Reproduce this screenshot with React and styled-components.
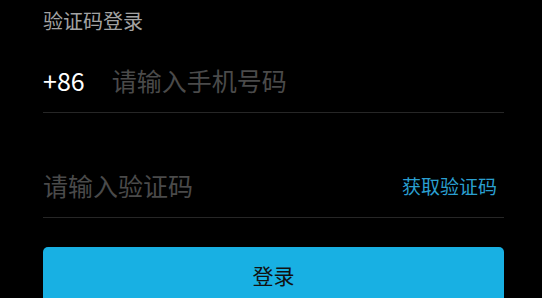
import React from "react";
import styled, { createGlobalStyle } from "styled-components";

const GlobalStyle = createGlobalStyle`
  html, body {
    margin: 0;
    padding: 0;
    background: #000000;
  }
  body {
    font-family: "Noto Sans CJK SC", "Noto Sans", sans-serif;
  }
`;

export default function App() {
  return (
    <>
      <GlobalStyle />
      <Page>
        <Title>验证码登录</Title>
        <Row>
          <Prefix>+86</Prefix>
          <Input placeholder="请输入手机号码" />
        </Row>
        <Row spaced>
          <Input placeholder="请输入验证码" />
          <CodeLink>获取验证码</CodeLink>
        </Row>
        <LoginButton>登录</LoginButton>
      </Page>
    </>
  );
}

const Page = styled.div`
  display: flex;
  flex-direction: column;
  padding: 0 38px 0 43px;
  height: 298px;
  overflow: hidden;
  box-sizing: border-box;
`;

const Title = styled.div`
  flex-shrink: 0;
  height: 48px;
  padding-top: 6px;
  box-sizing: border-box;
  font-size: 20px;
  line-height: 30px;
  color: #a3a3a3;
`;

const Row = styled.div`
  display: flex;
  align-items: center;
  height: 64px;
  margin-top: ${(props) => (props.spaced ? "40px" : "0")};
  border-bottom: 1px solid #262626;
  flex-shrink: 0;
`;

const Prefix = styled.span`
  font-size: 25px;
  color: #ffffff;
  margin-right: 27px;
`;

const Input = styled.input`
  flex: 1;
  min-width: 0;
  border: none;
  outline: none;
  background: transparent;
  padding: 0;
  font-family: inherit;
  font-size: 25px;
  color: #ffffff;

  &::placeholder {
    color: #4a4a4a;
  }
`;

const CodeLink = styled.span`
  font-size: 19px;
  color: #2a9fd0;
  margin-right: 7px;
`;

const LoginButton = styled.button`
  flex-shrink: 0;
  margin-top: 29px;
  height: 60px;
  padding: 0 0 4px;
  border: none;
  border-radius: 5px;
  background: #18b0e3;
  font-family: inherit;
  font-size: 21px;
  color: #111111;
`;
